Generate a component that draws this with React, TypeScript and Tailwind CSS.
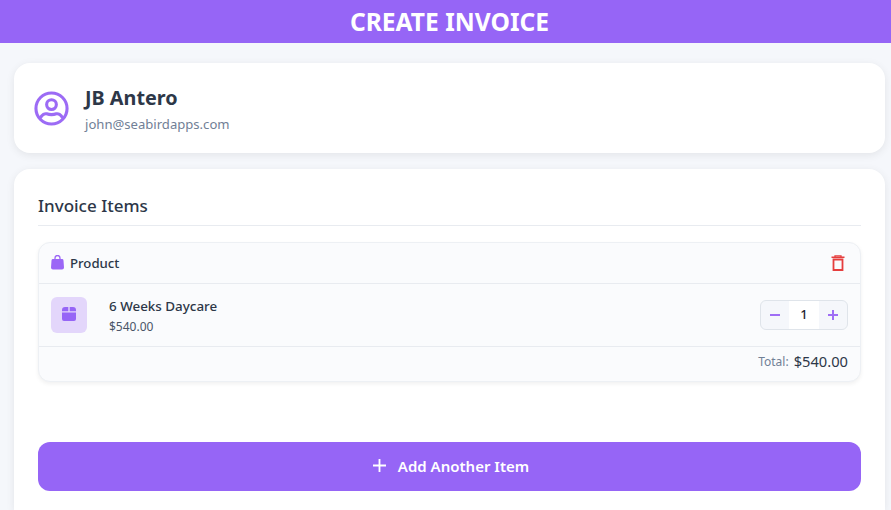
export default function App() {
  return (
    <div className="flex h-[510px] w-[891px] flex-col overflow-hidden bg-[#f5f7fb] font-['Noto_Sans',sans-serif] text-[#2d3748]">
      <header className="flex h-[43px] shrink-0 items-center justify-center bg-[#9665f6] pt-px pl-2">
        <h1 className="text-[24.6px] leading-none font-bold text-white">CREATE INVOICE</h1>
      </header>

      <main className="flex flex-1 flex-col gap-4 pt-5 pr-[6px] pl-[14px]">
        <section className="flex h-[90px] shrink-0 items-center gap-4 rounded-2xl bg-white pr-[19px] pl-5 shadow-[0_2px_8px_rgba(0,0,0,0.08)]">
          <svg viewBox="0 0 36 36" className="h-[35px] w-[35px] shrink-0" fill="none" stroke="#9c6bf5" strokeWidth="3.200">
            <circle cx="18" cy="18" r="16" />
            <circle cx="18" cy="14" r="5" />
            <path d="M6.500 28c1.500-4 5-5 6.500-4.500 3 1 7 1 10 0 1.500-.5 5 .5 6.500 4.500" />
          </svg>
          <div className="pt-0.5">
            <p className="text-[19.8px] leading-[26px] font-bold">JB Antero</p>
            <p className="mt-1 text-[13.1px] leading-[18px] text-[#718096]">john@seabirdapps.com</p>
          </div>
        </section>

        <section className="flex flex-1 flex-col rounded-t-2xl bg-white px-6 pt-[26px] shadow-[0_2px_8px_rgba(0,0,0,0.08)]">
          <h2 className="border-b border-[#e8ebf0] pb-[9px] text-[17px] leading-[21px] font-medium">Invoice Items</h2>

          <div className="mt-4 overflow-hidden rounded-xl border border-[#edf0f4] bg-[#fafbfd] shadow-[0_2px_4px_rgba(0,0,0,0.06)]">
            <div className="flex h-[41px] items-center justify-between border-b border-[#e8ebf0] pr-[15px] pl-3">
              <div className="flex items-center gap-[6px]">
                <svg viewBox="0 0 13 15" className="h-[15px] w-[13px]" fill="#9b66f6">
                  <path d="M2 4h9a1.500 1.500 0 0 1 1.500 1.400l.5 7.100a2 2 0 0 1-2 2H2a2 2 0 0 1-2-2l.500-7.100A1.500 1.500 0 0 1 2 4Z" />
                  <path d="M4 6V3a2.500 2.500 0 0 1 5 0v3" fill="none" stroke="#9b66f6" strokeWidth="1.300" />
                </svg>
                <span className="pt-0.5 text-[13.2px] font-medium">Product</span>
              </div>
              <svg viewBox="0 0 14 16" className="h-4 w-[14px]" fill="none" stroke="#e53e3e" strokeWidth="1.800">
                <path d="M0.500 2.300h13" strokeWidth="1.500" />
                <path d="M4 2V.8h6V2" strokeWidth="1.300" />
                <path d="M2.500 4.500h9V15h-9Z" />
              </svg>
            </div>

            <div className="flex h-[63px] items-center border-b border-[#e8ebf0] pr-3 pl-3">
              <div className="flex h-9 w-9 items-center justify-center rounded-md bg-[#e3d6fb]">
                <svg viewBox="0 0 14 14" className="mb-0.5 h-[14px] w-[14px]" fill="#9665f6">
                  <path d="M0 3a3 3 0 0 1 3-3h3.300v4.300H0ZM7.700 0H11a3 3 0 0 1 3 3v1.300H7.700ZM0 5.600h14V12a2 2 0 0 1-2 2H2a2 2 0 0 1-2-2Z" />
                </svg>
              </div>
              <div className="ml-[22px] flex-1 pt-0.5">
                <p className="text-[13.4px] leading-[18px] font-medium">6 Weeks Daycare</p>
                <p className="mt-1 text-[12px] leading-[16px] text-[#4a5568]">$540.00</p>
              </div>
              <div className="flex h-[30px] w-[88px] overflow-hidden rounded-md border border-[#dfe4ea] bg-[#f5f7fb]">
                <button className="flex w-7 items-center justify-center">
                  <span className="h-[2px] w-[10px] bg-[#9f6ef5]" />
                </button>
                <span className="flex flex-1 items-center justify-center bg-white text-[13px] font-medium text-[#1f2430]">1</span>
                <button className="relative flex w-7 items-center justify-center">
                  <span className="h-[2px] w-[10px] bg-[#9f6ef5]" />
                  <span className="absolute h-[10px] w-[2px] bg-[#9f6ef5]" />
                </button>
              </div>
            </div>

            <div className="flex h-[34px] items-center justify-end gap-[5px] pr-3 pb-[5px]">
              <span className="pt-px text-[12px] text-[#718096]">Total:</span>
              <span className="text-[14.7px]">$540.00</span>
            </div>
          </div>

          <button className="mt-[60px] flex h-[49px] shrink-0 items-center justify-center gap-3 rounded-xl bg-[#9665f6] pl-[3px] text-[15px] font-semibold text-white">
            <svg viewBox="0 0 12 12" className="mb-[3px] h-[13px] w-[13px]" stroke="white" strokeWidth="1.700">
              <path d="M6 0v12M0 6h12" />
            </svg>
            Add Another Item
          </button>
        </section>
      </main>
    </div>
  );
}
